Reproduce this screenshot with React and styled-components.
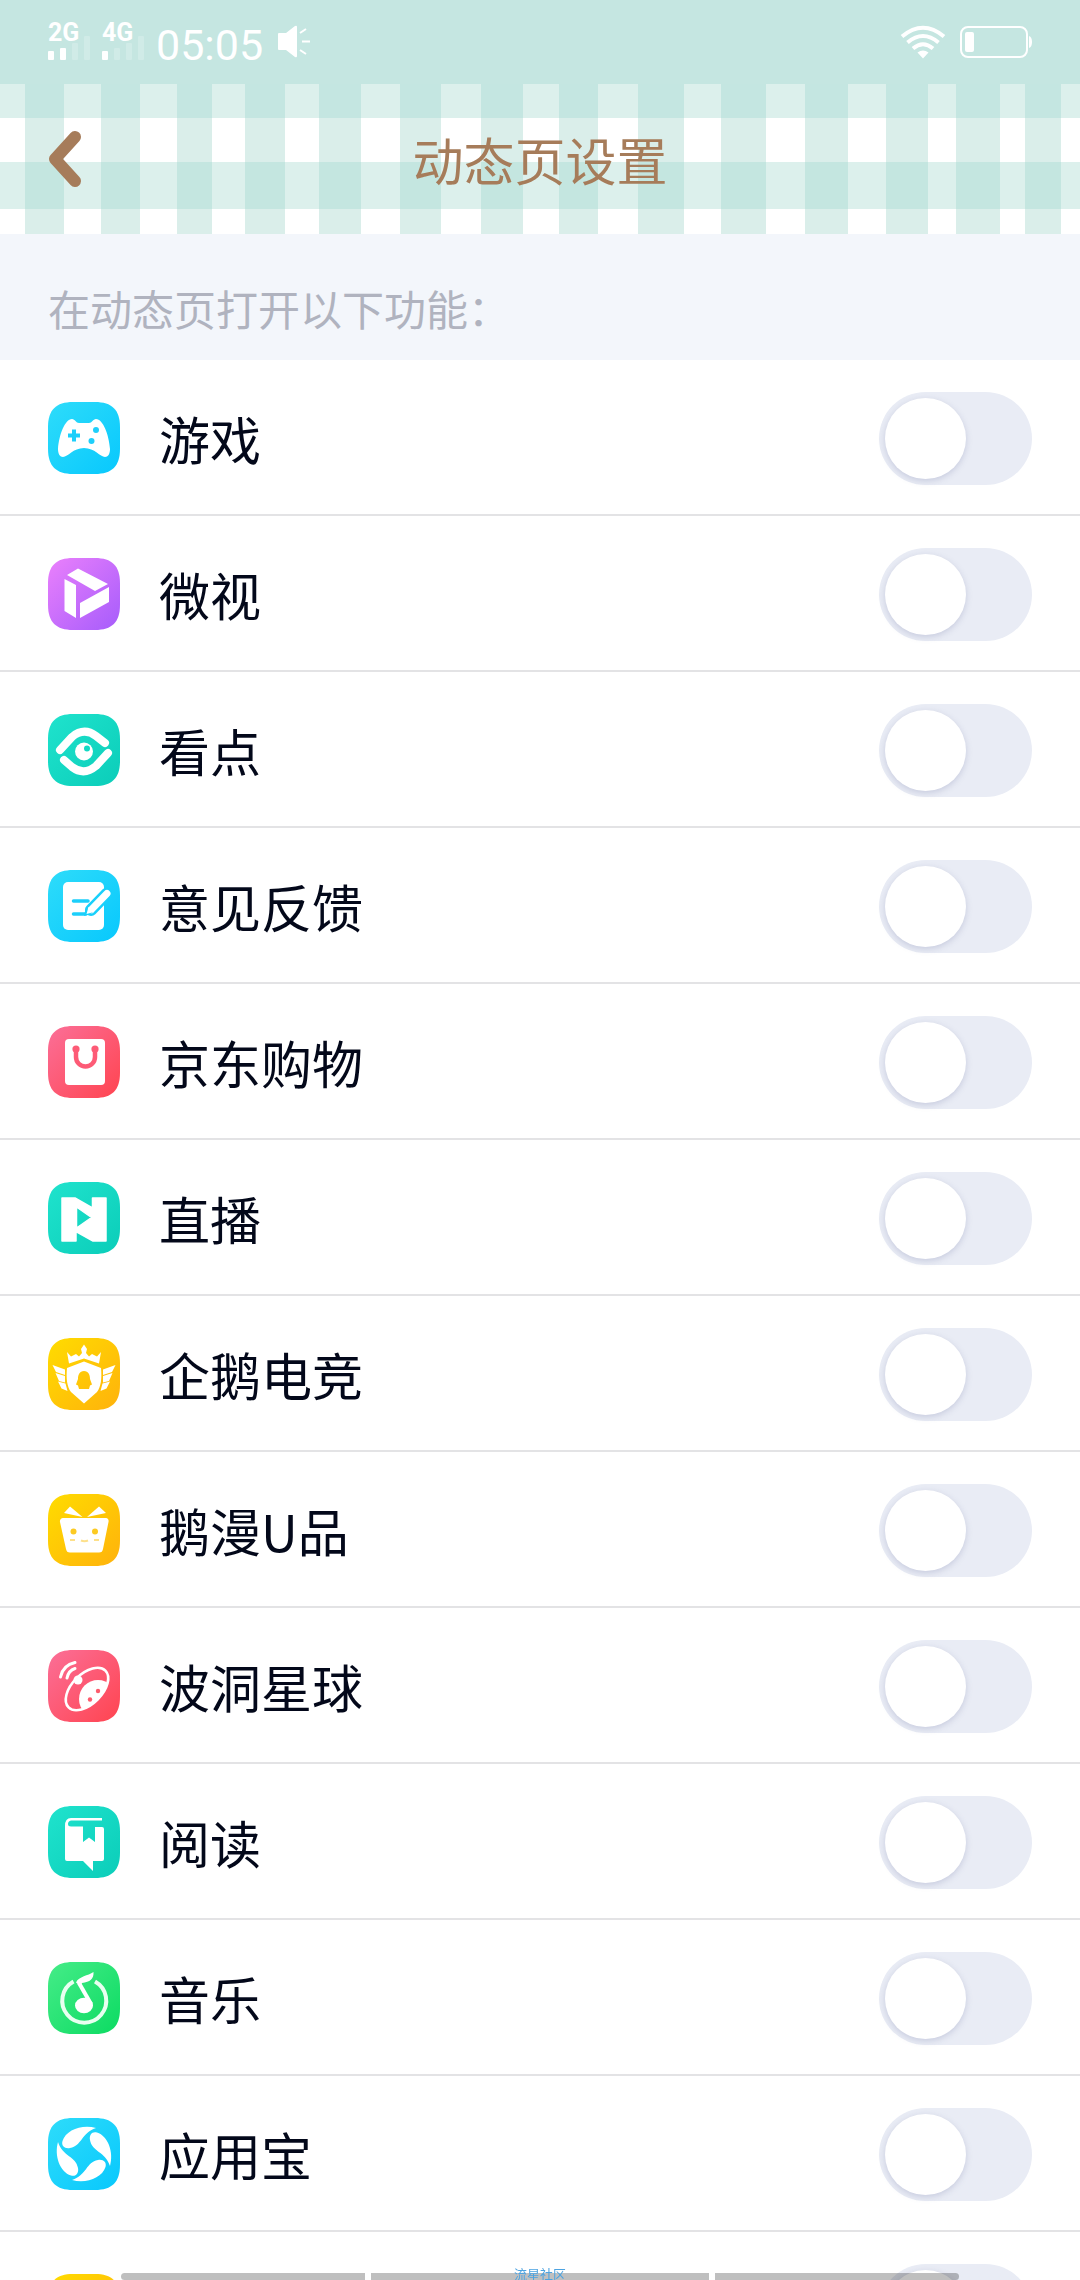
import React, { useState } from "react";
import styled, { createGlobalStyle } from "styled-components";

const GlobalStyle = createGlobalStyle`
  * {
    box-sizing: border-box;
  }
  body {
    margin: 0;
    background: #fff;
    font-family: "Noto Sans CJK SC", "Noto Sans", sans-serif;
  }
`;

// [x, width] of the pale columns of the gingham header
const pale = [
  [0, 25], [64, 37], [140, 37], [212, 33], [285, 34], [361, 39], [441, 40],
  [523, 36], [598, 40], [684, 37], [766, 39], [848, 38], [928, 28],
  [1000, 25], [1061, 19],
];

const Gingham = () => (
  <Backdrop viewBox="0 0 1080 150" preserveAspectRatio="none" aria-hidden="true">
    <rect width="1080" height="150" fill="#daeeea" />
    <rect width="1080" height="34" fill="#c4e6e1" />
    <rect y="78" width="1080" height="47" fill="#c4e6e0" />
    {pale.map(([x, w]) => (
      <g key={x}>
        <rect x={x} width={w} height="150" fill="#fff" />
        <rect x={x} width={w} height="34" fill="#dcf0ec" />
        <rect x={x} y="78" width={w} height="47" fill="#dcf0ec" />
      </g>
    ))}
  </Backdrop>
);

const gradients = {
  cyan: ["#2edcfa", "#08c8fd"],
  purple: ["#ea80fc", "#a65cfb"],
  teal: ["#1fe3cd", "#0bcdb9"],
  red: ["#fb6f98", "#ff4450"],
  yellow: ["#ffdc00", "#ffb20c"],
  green: ["#45ec88", "#0cdb62"],
};

const petal = "M48 10C34 6 18 12 14.5 23C13 28 17 31 22 30C34 28 33 15 48 10Z";

const items = [
  {
    name: "游戏",
    color: "cyan",
    art: (
      <>
        <path d="M24 17C27 17 28 21 31 21H41C44 21 45 17 48 17C55 17 61 33 62 47C62 52 60 55 57 55C52 55 47 46 36 46C25 46 20 55 15 55C12 55 10 52 10 47C11 33 17 17 24 17Z" />
        <path d="M26 27.5V39.5M20 33.5H32" stroke="#1ecffb" strokeWidth="4" />
        <circle cx="48" cy="28" r="3" fill="#1ecffb" />
        <circle cx="43.5" cy="39" r="3" fill="#1ecffb" />
      </>
    ),
  },
  {
    name: "微视",
    color: "purple",
    art: (
      <path d="M19 17L30 10.5L60 26L47 33ZM16.5 21L28 27V60L16.5 53ZM61 29V44L32 60V45Z" />
    ),
  },
  {
    name: "看点",
    color: "teal",
    art: (
      <>
        <g fill="none" stroke="#fff" strokeWidth="8">
          <path strokeLinecap="round" d="M12 36L24 23Q36 13 48 22L57 29" />
          <path strokeLinecap="round" d="M60 39L48 52Q36 62 24 53L16 46" />
        </g>
        <circle cx="36" cy="37.5" r="9" />
        <circle cx="39" cy="34.5" r="3" fill="#11d9c4" />
      </>
    ),
  },
  {
    name: "意见反馈",
    color: "cyan",
    art: (
      <>
        <rect x="15" y="12" width="41" height="48" rx="5" />
        <g fill="none" strokeLinecap="round">
          <path d="M25.5 31H40M25.5 44H38" stroke="#1ccffb" strokeWidth="3.5" />
          <path d="M59 23.5L43 40" stroke="#18d0fb" strokeWidth="12" />
          <path d="M59 23.5L43 40" stroke="#fff" strokeWidth="7" />
        </g>
        <path d="M36 46L38 37L45 43Z" fill="#18d0fb" />
        <path d="M38.5 44L40.5 37L46 42Z" />
      </>
    ),
  },
  {
    name: "京东购物",
    color: "red",
    art: (
      <>
        <rect x="17" y="13" width="40" height="46" rx="4" />
        <path
          d="M28 23V31A9.5 9.5 0 0 0 47 31V23"
          fill="none"
          stroke="#fd5b76"
          strokeWidth="4.5"
        />
        <circle cx="28" cy="23" r="3.6" fill="#fd5b76" />
        <circle cx="47" cy="23" r="3.6" fill="#fd5b76" />
      </>
    ),
  },
  {
    name: "直播",
    color: "teal",
    art: (
      <path
        fillRule="evenodd"
        stroke="#fff"
        strokeWidth="1.5"
        strokeLinejoin="round"
        d="M14 16H27L44.5 26V16H58V59H45L28 49.5V59H14ZM28.500 25V46L43.5 35.5Z"
      />
    ),
  },
  {
    name: "企鹅电竞",
    color: "yellow",
    art: (
      <>
        <path d="M19 14L23 18.5L28 16L31 18.5L34 15L33 11L36 6.5L39 11L38 15L41 18.5L44 16L49 18.5L53 14L51 25.5L36 20.5L21 25.5Z" />
        <path
          fillRule="evenodd"
          d="M36 23.5L53 30C54 40 53 49 49 54L36 65.5L23 54C19 49 18 40 19 30ZM36 33C31.5 33 30 37 30 41L28 46.5L30 47.5L31 51H41L42 47.5L44 46.5L42 41C42 37 40.5 33 36 33Z"
        />
        <path d="M4.500 27L17 31.500V37L8 34ZM7.500 35L17 38V44.500L11 43ZM10 43.500L17.500 45.500L19.500 53L13.500 50.500Z" />
        <path d="M67.500 27L55 31.500V37L64 34ZM64.500 35L55 38V44.500L61 43ZM62 43.500L54.500 45.500L52.500 53L58.500 50.500Z" />
      </>
    ),
  },
  {
    name: "鹅漫U品",
    color: "yellow",
    art: (
      <>
        <path d="M15 24H58C60 24 61 26 60.5 28L55 55C54.5 57.5 53.5 58.5 51 58.5H22C19.5 58.5 18.5 57.5 18 55L12 28C11.5 26 13 24 15 24Z" />
        <path d="M22 12.5L34.5 23L16 19Z" />
        <path d="M51 12.5L39 23L58 19Z" />
        <circle cx="25.5" cy="37.5" r="3" fill="#fcca22" />
        <circle cx="47" cy="37.5" r="3" fill="#fcca22" />
        <path
          d="M22 46H27M46 46H51M33 46.5Q36.5 48 40 46.5"
          fill="none"
          stroke="#fde08a"
          strokeWidth="2"
        />
      </>
    ),
  },
  {
    name: "波洞星球",
    color: "red",
    art: (
      <>
        <clipPath id="planet">
          <ellipse cx="39" cy="39" rx="27" ry="15" transform="rotate(-45 39 39)" />
        </clipPath>
        <circle cx="50" cy="49" r="19" clipPath="url(#planet)" />
        <g fill="none" stroke="#fff">
          <ellipse
            cx="39"
            cy="39"
            rx="26"
            ry="15"
            strokeWidth="2.6"
            transform="rotate(-45 39 39)"
          />
          <path
            d="M12.5 27Q15 15 27 12.5M19 28Q20.5 20.5 27 18.5"
            strokeWidth="3"
            strokeLinecap="round"
          />
        </g>
        <circle cx="30" cy="30" r="4.5" />
        <circle cx="42" cy="49.5" r="2.2" fill="#fd5b6c" />
        <circle cx="50" cy="41" r="2.2" fill="#fd5b6c" />
      </>
    ),
  },
  {
    name: "阅读",
    color: "teal",
    art: (
      <path d="M17 20Q17 12 23 12H54V14.5H23Q20 15 20 18Q20 20.5 23 20.5H35V36L41 31.5L47 36V21H54Q56 21 56 23V53Q56 55 54 55H45V65L35 55H19Q17 55 17 53Z" />
    ),
  },
  {
    name: "音乐",
    color: "green",
    art: (
      <>
        <path
          d="M25.5 19.5A22 22 0 1 0 47 19.5"
          fill="none"
          stroke="#e8fff0"
          strokeWidth="4"
        />
        <ellipse cx="36" cy="43.5" rx="9" ry="7.8" />
        <path d="M31 21L43 42" stroke="#fff" strokeWidth="4" />
        <path d="M28 20.5C31 14 40 14 45.5 10C46 17 42 20 34 21L32 24Z" />
      </>
    ),
  },
  {
    name: "应用宝",
    color: "cyan",
    art: [0, 90, 180, 270].map((deg) => (
      <path key={deg} d={petal} transform={`rotate(${deg} 36 36)`} />
    )),
  },
  { name: "", color: "yellow", art: null },
];

const AppIcon = ({ color, art }) => {
  const [from, to] = gradients[color];
  return (
    <IconSvg viewBox="0 0 72 72" aria-hidden="true">
      <defs>
        <linearGradient id={`bg-${color}`} x1="0" y1="0" x2="1" y2="1">
          <stop offset="0" stopColor={from} />
          <stop offset="1" stopColor={to} />
        </linearGradient>
      </defs>
      <path
        d="M25 0H47C64 0 72 8 72 25V47C72 64 64 72 47 72H25C8 72 0 64 0 47V25C0 8 8 0 25 0Z"
        fill={`url(#bg-${color})`}
      />
      <g fill="#fff">{art}</g>
    </IconSvg>
  );
};

const SignalBars = ({ label, level }) => (
  <Signal>
    {label}
    <svg width="42" height="24" viewBox="0 0 42 24" fill="#fff">
      {[9, 12, 17, 24].map((h, i) => (
        <rect
          key={h}
          x={i * 12}
          y={24 - h}
          width="6"
          height={h}
          rx="1"
          opacity={i < level ? 1 : 0.2}
        />
      ))}
    </svg>
  </Signal>
);

const App = () => {
  const [enabled, setEnabled] = useState({});

  const onToggle = (name) => {
    setEnabled({ ...enabled, [name]: !enabled[name] });
  };

  return (
    <Screen>
      <GlobalStyle />
      <StatusBar>
        <SignalBars label="2G" level={2} />
        <SignalBars label="4G" level={1} />
        <Time>05:05</Time>
        <svg width="34" height="34" viewBox="0 0 34 34" fill="#fff">
          <path d="M2 8H9L18 1Q20 0 20 2V31Q20 33 18 32L9 25H2Q1 25 1 24V9Q1 8 2 8Z" />
          <path
            d="M23 8L29 4M25 16.5H33M23 25L29 29"
            stroke="#fff"
            strokeWidth="2"
          />
        </svg>
        <StatusRight>
          <svg width="46" height="34" viewBox="0 0 46 34" fill="none">
            <g stroke="#fff" strokeWidth="4">
              <path d="M2 11.5Q23 -6 44 11.5" />
              <path d="M7.5 17.5Q23 4.5 38.5 17.5" />
              <path d="M13 23.5Q23 15 33 23.5" />
            </g>
            <path d="M17.5 27.5Q23 23.5 28.5 27.5L23 33.5Z" fill="#fff" />
          </svg>
          <svg width="72" height="32" viewBox="0 0 72 32" fill="#fff">
            <rect
              x="1"
              y="1"
              width="66"
              height="30"
              rx="7"
              fill="none"
              stroke="#fff"
              strokeWidth="2"
            />
            <rect x="5" y="6" width="9" height="20" rx="2" />
            <path d="M69 10Q72 11 72 16T69 22Z" />
          </svg>
        </StatusRight>
      </StatusBar>

      <Header>
        <Gingham />
        <BackButton type="button" aria-label="返回">
          <svg width="34" height="56" viewBox="0 0 34 56" fill="none">
            <path
              d="M27 6L7 28L27 50"
              stroke="#a67c5a"
              strokeWidth="12"
              strokeLinecap="round"
              strokeLinejoin="round"
            />
          </svg>
        </BackButton>
        <Title>动态页设置</Title>
      </Header>

      <SectionTitle>在动态页打开以下功能：</SectionTitle>

      <List>
        {items.map((item) => (
          <Row key={item.name}>
            <AppIcon color={item.color} art={item.art} />
            <Name>{item.name}</Name>
            <Switch
              type="checkbox"
              role="switch"
              aria-label={item.name || "更多"}
              checked={!!enabled[item.name]}
              onChange={() => onToggle(item.name)}
            />
          </Row>
        ))}
      </List>

      <BottomBar>
        <Segment $side="left" />
        <Segment $grow={338} />
        <Segment $side="right" />
        <Community>流星社区</Community>
      </BottomBar>
    </Screen>
  );
};

const Screen = styled.div`
  height: 100vh;
  display: flex;
  flex-direction: column;
  overflow: hidden;
`;

const StatusBar = styled.div`
  flex: none;
  display: flex;
  align-items: center;
  height: 84px;
  padding: 0 48px;
  background: #c5e6e1;
  color: #fff;
`;

const Signal = styled.div`
  position: relative;
  width: 42px;
  height: 36px;
  margin-right: 12px;
  font: bold 25px/18px Roboto, sans-serif;

  svg {
    position: absolute;
    left: 0;
    bottom: 0;
  }
`;

const Time = styled.span`
  margin: 6px 14px 0 0;
  font: 43px/48px Roboto, sans-serif;
`;

const StatusRight = styled.div`
  display: flex;
  align-items: center;
  gap: 14px;
  margin-left: auto;
`;

const Header = styled.header`
  position: relative;
  flex: none;
  display: flex;
  align-items: center;
  height: 150px;
  padding: 0 48px;
`;

const Backdrop = styled.svg`
  position: absolute;
  inset: 0;
  width: 100%;
  height: 100%;
`;

const BackButton = styled.button`
  position: relative;
  display: flex;
  width: 34px;
  padding: 0;
  border: 0;
  background: none;
  cursor: pointer;
`;

const Title = styled.h1`
  position: relative;
  flex: 1;
  margin: 0 34px 0 0;
  color: #a67c5a;
  font-size: 51px;
  font-weight: 400;
  line-height: 76px;
  text-align: center;
`;

const SectionTitle = styled.h2`
  flex: none;
  margin: 0;
  padding: 42px 48px 20px;
  background: #f3f6fb;
  color: #b0b3bf;
  font-size: 42px;
  font-weight: 400;
  line-height: 64px;
`;

const List = styled.div`
  flex: 1;
  min-height: 0;
  overflow: hidden;
  background: #fff;
`;

const Row = styled.label`
  display: flex;
  align-items: center;
  height: 156px;
  padding: 2px 48px 0;
  border-bottom: 2px solid #e3e3e5;
`;

const IconSvg = styled.svg`
  flex: none;
  width: 72px;
  height: 72px;
`;

const Name = styled.span`
  flex: 1;
  margin-left: 39px;
  color: #03081a;
  font-size: 51px;
  line-height: 76px;
`;

const Switch = styled.input`
  appearance: none;
  flex: none;
  width: 153px;
  height: 93px;
  margin: 0;
  padding: 6px;
  border-radius: 47px;
  background: #e9ecf5;
  cursor: pointer;

  &::before {
    content: "";
    display: block;
    width: 81px;
    height: 81px;
    border-radius: 50%;
    background: #fff;
    box-shadow: 0 2px 6px rgba(120, 125, 170, 0.3);
  }
  &:checked {
    background: #12b7f5;
  }
  &:checked::before {
    margin-left: auto;
  }
`;

const BottomBar = styled.div`
  position: fixed;
  left: 0;
  right: 0;
  bottom: 0;
  display: flex;
  gap: 6px;
  height: 7px;
  padding: 0 121px;
`;

const Segment = styled.div`
  flex: ${(props) => props.$grow || 244};
  background: rgba(0, 0, 0, 0.25);
  border-radius: ${(props) =>
    props.$side === "left"
      ? "4px 0 0 4px"
      : props.$side === "right"
      ? "0 4px 4px 0"
      : "0"};
`;

const Community = styled.span`
  position: absolute;
  bottom: 0;
  left: 0;
  right: 0;
  color: #4da3e0;
  font-size: 13px;
  line-height: 12px;
  text-align: center;
`;

export default App;
